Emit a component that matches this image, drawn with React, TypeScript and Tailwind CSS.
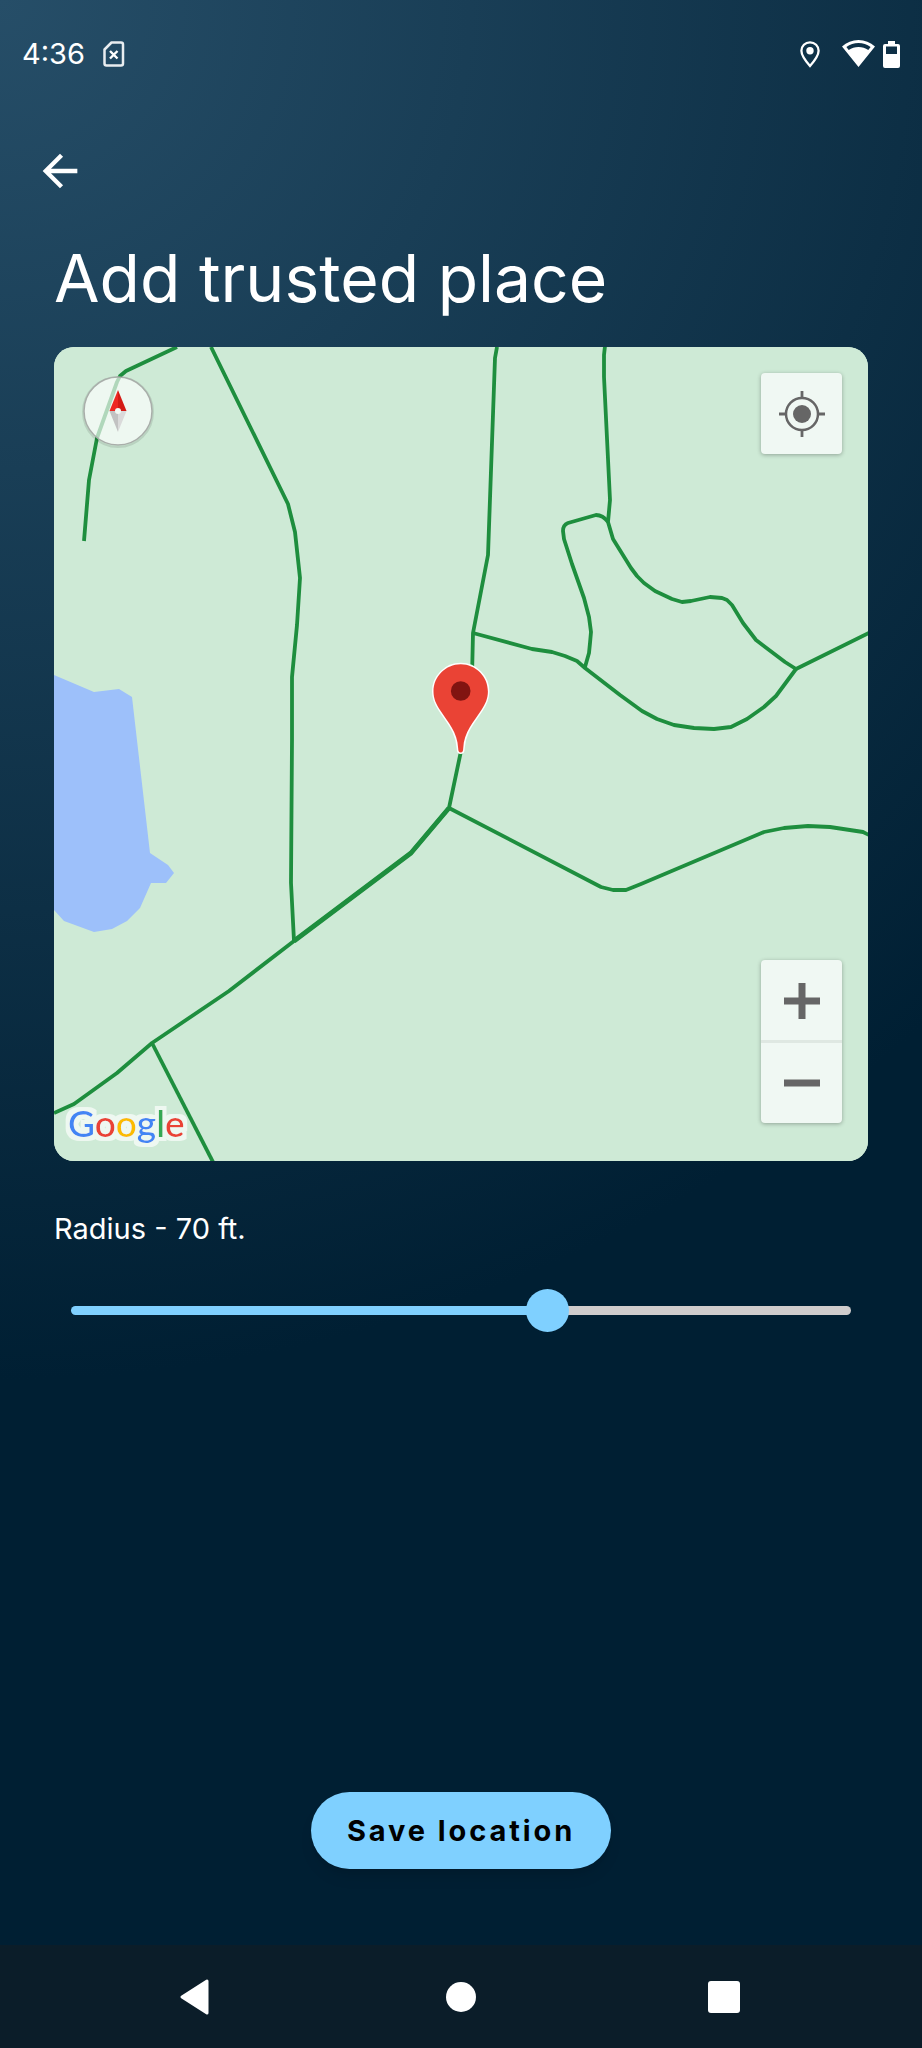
import React, { useState } from "react";
import { MdArrowBack } from "react-icons/md";

const MIN_RADIUS = 15;
const MAX_RADIUS = 104;

const StatusBar = () => {
  return (
    <header className="flex h-[108px] items-center justify-between px-[22px] text-white">
      <div className="flex items-center gap-[18px]">
        <span className="text-[29px] leading-9">4:36</span>
        <svg width="22" height="26" viewBox="0 0 22 26" fill="none">
          <path
            d="M8.500 1.500H18a2 2 0 0 1 2 2v19a2 2 0 0 1-2 2H3.500a2 2 0 0 1-2-2V8.500z"
            stroke="#fff"
            strokeOpacity="0.9"
            strokeWidth="2.500"
            strokeLinejoin="round"
          />
          <path d="M7 10l7.500 7.500M14.500 10L7 17.500" stroke="#fff" strokeWidth="2.400" />
        </svg>
      </div>
      <div className="flex items-center">
        <svg width="20" height="27" viewBox="0 0 20 27" fill="none" className="mr-[22px]">
          <path
            d="M10 1.300c-4.800 0-8.600 3.700-8.600 8.500C1.400 15 6 20.500 10 25c4-4.500 8.600-10 8.600-15.200 0-4.800-3.800-8.500-8.600-8.500z"
            stroke="#fff"
            strokeWidth="2.300"
          />
          <circle cx="10" cy="9.700" r="3.700" fill="#fff" />
        </svg>
        <svg width="33" height="28" viewBox="0 0 33 28" className="mr-2">
          <path
            fill="#fff"
            fillRule="evenodd"
            d="M16.500 0C10.300 0 4.600 2.300 0 6.400L16.500 27 33 6.400C28.400 2.300 22.700 0 16.500 0zM4.400 7.100C8 4.400 12.100 3 16.500 3s8.500 1.400 12.100 4.100l-2.300 3C23.400 8 20.100 6.900 16.500 6.900S9.600 8 6.700 10.100z"
          />
        </svg>
        <svg width="17" height="27" viewBox="0 0 17 27">
          <path
            fill="#fff"
            fillRule="evenodd"
            d="M5 0h7v3h3a2 2 0 0 1 2 2v20a2 2 0 0 1-2 2H2a2 2 0 0 1-2-2V5a2 2 0 0 1 2-2h3zM3 5.500v7.500h11V5.500z"
          />
        </svg>
      </div>
    </header>
  );
};

const trails = [
  "M123 0L72 24L66 29L63 35L53 63L43 91L35 133L30 194",
  "M157 0L234 157L241 185L246 231L243 278L238 330L238 393L237 536L240 594",
  "M443 0L441 11L434 208L419 286L418 330L407 404L395 461L357 506L240 594L175 644L98 696L63 726L20 757L0 766",
  "M98 696L159 815",
  "M551 -1L550 8L550 30L556 153L554 175L559 192L577 221L583 229L590 236L601 244L618 252L628 255L637 254L656 250L668 251L673 253L678 258L689 276L702 293L731 315L742 322L815 286",
  "M554 175Q549 168 542 168L514 176Q509 178 509 184L510 192L518 217L530 251L535 270L537 285L536 296L535 306L531 320",
  "M419 286L478 302L498 305L511 309L523 314L531 321L566 348L588 364L603 372L620 378L640 381L660 382L677 380L693 372L710 360L722 349L742 322",
  "M395 461L547 540L559 543L572 543L587 537L710 485L730 481L754 479L776 480L809 485L815 488",
];

const MapCanvas = () => {
  return (
    <svg viewBox="0 0 814 814" className="block h-auto w-full">
      <rect width="814" height="814" fill="#ceead6" />
      <path
        d="M0 328L40 345L65 342L78 350L96 506L114 518L120 526L112 536L97 536L86 561L73 574L58 582L40 585L10 574L0 563z"
        fill="#9dc0fa"
      />
      <g fill="none" stroke="#1e8e3e" strokeLinejoin="round">
        {trails.map((d) => (
          <path key={d} d={d} strokeWidth="3.800" />
        ))}
        <path d="M395 461L357 506L240 594" strokeWidth="4.800" />
      </g>
      <path
        d="M406.700 317.300c-15 0-27.200 12.200-27.200 27.200 0 7 2.500 12.500 6.500 18.500 8 12.500 17.500 22 18.200 38.500 0 2.500.8 4 2.500 4s2.500-1.500 2.500-4c.7-16.500 10.200-26 18.200-38.500 4-6 6.500-11.500 6.500-18.500 0-15-12.200-27.200-27.200-27.200z"
        fill="#ea4335"
        stroke="#fff"
        strokeWidth="3"
        paintOrder="stroke"
      />
      <circle cx="406.700" cy="344" r="9.800" fill="#811411" />
    </svg>
  );
};

const Compass = () => {
  return (
    <svg width="76" height="76" viewBox="0 0 76 76">
      <circle cx="38" cy="39" r="35" fill="none" stroke="#000" strokeOpacity="0.1" strokeWidth="2" />
      <circle cx="38" cy="38" r="34" fill="#fff" fillOpacity="0.65" stroke="#a9aeaa" strokeWidth="1.500" />
      <path d="M38 17L29.500 38H38z" fill="#ee2721" />
      <path d="M38 17L46.500 38H38z" fill="#d41b15" />
      <path d="M38 59L29.500 38H38z" fill="#c2c2c2" />
      <path d="M38 59L46.500 38H38z" fill="#dadada" />
      <circle cx="38" cy="38" r="3" fill="#f1f8f3" />
    </svg>
  );
};

const GoogleMark = () => {
  return (
    <svg width="130" height="52" viewBox="0 0 130 52">
      <filter id="halo" x="-10%" y="-20%" width="120%" height="140%">
        <feMorphology in="SourceAlpha" operator="dilate" radius="4" result="spread" />
        <feFlood floodColor="#fff" floodOpacity="0.65" />
        <feComposite in2="spread" operator="in" result="glow" />
        <feMerge>
          <feMergeNode in="glow" />
          <feMergeNode in="SourceGraphic" />
        </feMerge>
      </filter>
      <text
        x="6"
        y="36"
        fontSize="37"
        fontWeight="500"
        filter="url(#halo)"
        className="font-['Lato',sans-serif]"
      >
        <tspan fill="#4285f4">G</tspan>
        <tspan fill="#ea4335">o</tspan>
        <tspan fill="#fbbc04">o</tspan>
        <tspan fill="#4285f4">g</tspan>
        <tspan fill="#34a853">l</tspan>
        <tspan fill="#ea4335">e</tspan>
      </text>
    </svg>
  );
};

const mapButtonClass =
  "flex h-[81px] w-[81px] cursor-pointer items-center justify-center text-[#666666]";

const PlaceMap = () => {
  return (
    <section
      aria-label="Map"
      className="relative overflow-hidden rounded-[20px] bg-[#ceead6]"
    >
      <MapCanvas />
      <div className="absolute top-[26px] left-[26px]">
        <Compass />
      </div>
      <button
        aria-label="My location"
        className={`${mapButtonClass} absolute top-[26px] right-[26px] rounded-sm bg-[#f0f8f3] shadow-[0_1px_4px_rgba(0,0,0,0.3)]`}
      >
        <svg width="46" height="46" viewBox="0 0 46 46" fill="none" stroke="currentColor">
          <circle cx="23" cy="23" r="16" strokeWidth="2.500" />
          <circle cx="23" cy="23" r="9" fill="currentColor" stroke="none" />
          <path d="M23 0v7M23 39v7M0 23h7M39 23h7" strokeWidth="2.800" />
        </svg>
      </button>
      <div className="absolute right-[26px] bottom-[38px] flex flex-col rounded-sm bg-[#f0f8f3] shadow-[0_1px_4px_rgba(0,0,0,0.3)]">
        <button aria-label="Zoom in" className={mapButtonClass}>
          <svg width="36" height="36" viewBox="0 0 36 36" fill="currentColor">
            <path d="M14.500 0h7v14.500H36v7H21.500V36h-7V21.500H0v-7h14.500z" />
          </svg>
        </button>
        <div className="-my-px h-[3px] bg-[#dfe8e2]" />
        <button aria-label="Zoom out" className={mapButtonClass}>
          <svg width="36" height="36" viewBox="0 0 36 36" fill="currentColor">
            <path d="M0 14.500h36v7H0z" />
          </svg>
        </button>
      </div>
      <div className="absolute bottom-2 left-2">
        <GoogleMark />
      </div>
    </section>
  );
};

const RadiusSlider = () => {
  const [radius, setRadius] = useState(70);
  const percent = ((radius - MIN_RADIUS) / (MAX_RADIUS - MIN_RADIUS)) * 100;

  const onRadiusChange = (e: React.ChangeEvent<HTMLInputElement>) => {
    setRadius(parseInt(e.target.value));
  };

  return (
    <div className="mt-[50px] flex flex-col">
      <label htmlFor="radius" className="text-[29px] leading-9 text-white">
        Radius - {radius} ft.
      </label>
      <div className="mt-[42px] flex h-[43px] items-center px-[17px]">
        <input
          id="radius"
          type="range"
          min={MIN_RADIUS}
          max={MAX_RADIUS}
          value={radius}
          onChange={onRadiusChange}
          style={{
            background: `linear-gradient(to right, #7fd0ff ${percent}%, #cfcccc ${percent}%)`,
          }}
          className="h-[9px] w-full cursor-pointer appearance-none rounded-full [&::-webkit-slider-thumb]:h-[43px] [&::-webkit-slider-thumb]:w-[43px] [&::-webkit-slider-thumb]:appearance-none [&::-webkit-slider-thumb]:rounded-full [&::-webkit-slider-thumb]:bg-[#7fd0ff]"
        />
      </div>
    </div>
  );
};

const NavigationBar = () => {
  return (
    <nav className="grid h-[103px] grid-cols-3 items-center justify-items-center bg-[#0b1d29] px-[66px]">
      <button aria-label="Back">
        <svg width="36" height="36" viewBox="0 0 36 36">
          <path
            d="M2 18L27 2v32z"
            fill="#fff"
            stroke="#fff"
            strokeWidth="3"
            strokeLinejoin="round"
          />
        </svg>
      </button>
      <button aria-label="Home">
        <svg width="32" height="32" viewBox="0 0 32 32">
          <circle cx="16" cy="16" r="15" fill="#fff" />
        </svg>
      </button>
      <button aria-label="Recent apps">
        <svg width="32" height="32" viewBox="0 0 32 32">
          <rect width="32" height="32" rx="3" fill="#fff" />
        </svg>
      </button>
    </nav>
  );
};

export default function App() {
  return (
    <div className="flex min-h-screen flex-col bg-[#001f33] bg-[radial-gradient(circle_1380px_at_top_left,#264e68,#001f33)] font-['Inter',sans-serif]">
      <StatusBar />
      <div className="flex h-[126px] items-center px-[34px]">
        <button aria-label="Go back" className="cursor-pointer text-white">
          <MdArrowBack size={52} />
        </button>
      </div>
      <main className="flex flex-1 flex-col px-[54px]">
        <h1 className="mb-[25px] text-[66px] leading-[88px] text-white">
          Add trusted place
        </h1>
        <PlaceMap />
        <RadiusSlider />
        <button className="mt-auto mb-[76px] cursor-pointer self-center rounded-full bg-[#7fd0ff] px-9 py-5 text-[29px] leading-[37px] font-bold tracking-widest text-black shadow-lg">
          Save location
        </button>
      </main>
      <NavigationBar />
    </div>
  );
}
